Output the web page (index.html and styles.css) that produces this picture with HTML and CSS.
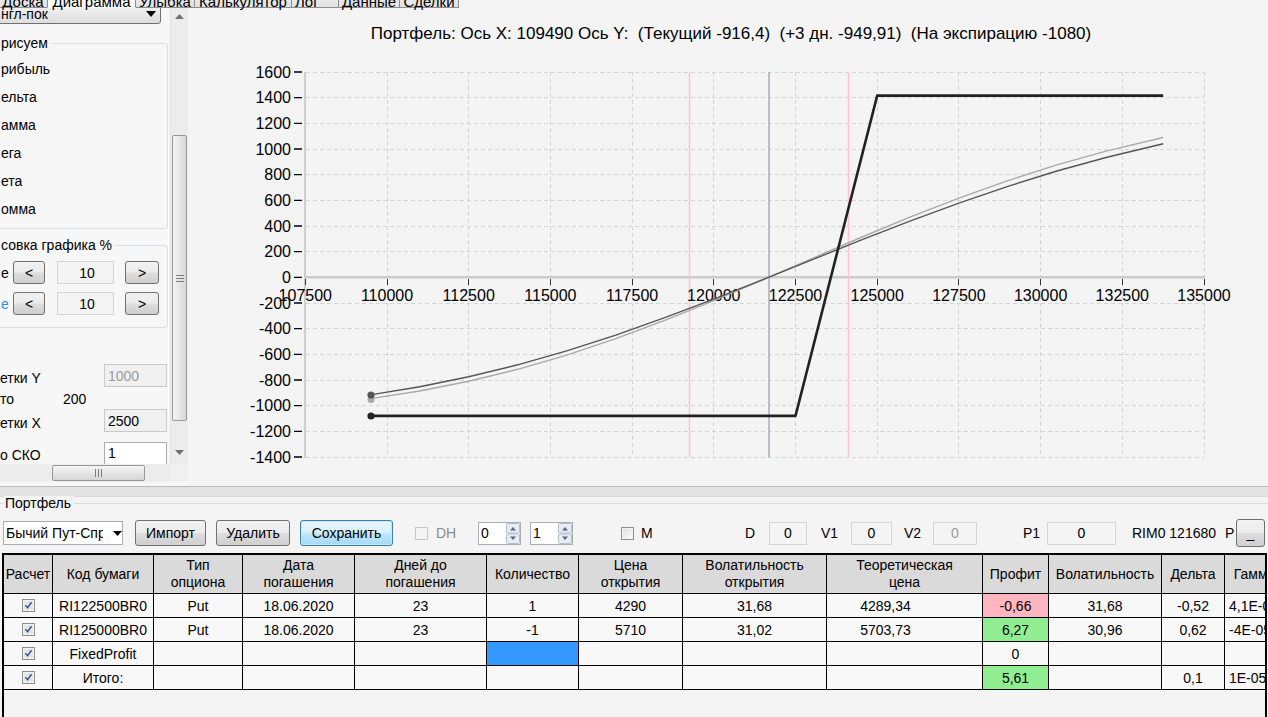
FILE: index.html
```html
<!DOCTYPE html>
<html lang="ru">
<head>
<meta charset="utf-8">
<title>Диаграмма</title>
<link rel="stylesheet" href="styles.css">
</head>
<body>
<div class="app">
  <div class="tabs">
    <div class="tabrow">
      <div class="tab w1">Доска</div>
      <div class="tab sel w2">Диаграмма</div>
      <div class="tab w3">Улыбка</div>
      <div class="tab w4">Калькулятор</div>
      <div class="tab w5">Лог</div>
      <div class="tab w6">Данные</div>
      <div class="tab w7">Сделки</div>
    </div>
  </div>

  <div class="upper">
    <div class="left">
      <div class="lp-main">
        <div class="lp-content">
          <div class="tcombo"><span class="tctext">нгл-пок</span><svg class="tcarr" width="10" height="6" viewBox="0 0 10 6"><path d="M0 0H10L5 6Z" fill="#000"/></svg></div>
          <div class="group g1">
            <div class="legend">рисуем</div>
            <div class="item first">рибыль</div>
            <div class="item">ельта</div>
            <div class="item">амма</div>
            <div class="item">ега</div>
            <div class="item">ета</div>
            <div class="item">омма</div>
          </div>
          <div class="group g2">
            <div class="legend">совка графика %</div>
            <div class="brow r1"><span class="bl">е</span><div class="wbtn sb sb-l">&lt;</div><div class="tb ro tb10">10</div><div class="wbtn sb sb-r">&gt;</div></div>
            <div class="brow r2"><span class="bl blue">е</span><div class="wbtn sb sb-l">&lt;</div><div class="tb ro tb10">10</div><div class="wbtn sb sb-r">&gt;</div></div>
          </div>
          <div class="frow fy"><span class="fl">етки Y</span><div class="tb gray dis fb">1000</div></div>
          <div class="frow fs"><span class="fl2">то</span><span>200</span></div>
          <div class="frow fx"><span class="fl">етки X</span><div class="tb gray fb">2500</div></div>
          <div class="frow fc"><span class="fl">о СКО</span><div class="tb fb">1</div></div>
        </div>
        <div class="vscroll">
          <div class="sarr"><svg width="9" height="5" viewBox="0 0 9 5"><path d="M0 5L4.5 0L9 5Z" fill="#707070"/></svg></div>
          <div class="vsp1"></div>
          <div class="vthumb"><svg width="8" height="7" viewBox="0 0 8 7"><path d="M0 0.5H8M0 3.5H8M0 6.5H8" stroke="#7a7a7a" stroke-width="1"/></svg></div>
          <div class="vsp2"></div>
          <div class="sarr"><svg width="9" height="5" viewBox="0 0 9 5"><path d="M0 0L4.5 5L9 0Z" fill="#707070"/></svg></div>
        </div>
      </div>
      <div class="hs-row">
        <div class="hscroll"><div class="hthumb"><svg width="7" height="8" viewBox="0 0 7 8"><path d="M0.5 0V8M3.5 0V8M6.5 0V8" stroke="#7a7a7a" stroke-width="1"/></svg></div></div>
        <div class="corner"></div>
      </div>
    </div>

    <div class="chart">
      <div class="chart-title">Портфель: Ось X: 109490 Ось Y:  (Текущий -916,4)  (+3 дн. -949,91)  (На экспирацию -1080)</div>
      <svg class="plot" width="1080" height="426" viewBox="188 60 1080 426">
        <path d="M306 72.5H1204M306 97.5H1204M306 123.5H1204M306 149.5H1204M306 174.5H1204M306 200.5H1204M306 226.5H1204M306 251.5H1204M306 303.5H1204M306 328.5H1204M306 354.5H1204M306 380.5H1204M306 405.5H1204M306 431.5H1204M306 457.5H1204" stroke="#d4d4d4" stroke-width="1" stroke-dasharray="4 3" fill="none"/>
        <path d="M387.5 72V457M468.5 72V457M550.5 72V457M632.5 72V457M713.5 72V457M795.5 72V457M877.5 72V457M958.5 72V457M1040.5 72V457M1122.5 72V457M1204.5 72V457" stroke="#d4d4d4" stroke-width="1" stroke-dasharray="4 3" fill="none"/>
        <line x1="305" y1="72" x2="305" y2="458" stroke="#cfcfcf" stroke-width="2"/>
        <line x1="304" y1="277.3" x2="1205" y2="277.3" stroke="#cccccc" stroke-width="2.5"/>
        <path d="M294 72H302M294 97.6H302M294 123.3H302M294 149H302M294 174.6H302M294 200.3H302M294 226H302M294 251.6H302M294 277.3H302M294 303H302M294 328.6H302M294 354.3H302M294 380H302M294 405.6H302M294 431.3H302M294 457H302" stroke="#000" stroke-width="1.3"/>
        <path d="M305.5 279V285M387.5 279V285M468.5 279V285M550.5 279V285M632.5 279V285M713.5 279V285M795.5 279V285M877.5 279V285M958.5 279V285M1040.5 279V285M1122.5 279V285M1204.5 279V285" stroke="#333" stroke-width="1"/>
        <g class="ylab" text-anchor="end">
          <text x="291" y="77.5">1600</text>
          <text x="291" y="103.1">1400</text>
          <text x="291" y="128.8">1200</text>
          <text x="291" y="154.5">1000</text>
          <text x="291" y="180.1">800</text>
          <text x="291" y="205.8">600</text>
          <text x="291" y="231.5">400</text>
          <text x="291" y="257.1">200</text>
          <text x="291" y="282.8">0</text>
          <text x="291" y="308.5">-200</text>
          <text x="291" y="334.1">-400</text>
          <text x="291" y="359.8">-600</text>
          <text x="291" y="385.5">-800</text>
          <text x="291" y="411.1">-1000</text>
          <text x="291" y="436.8">-1200</text>
          <text x="291" y="462.5">-1400</text>
        </g>
        <line x1="689.5" y1="72" x2="689.5" y2="457" stroke="#ffc3cd" stroke-width="1.5"/>
        <line x1="848.5" y1="72" x2="848.5" y2="457" stroke="#ffc3cd" stroke-width="1.5"/>
        <line x1="769" y1="72" x2="769" y2="457" stroke="#a6adba" stroke-width="1.5"/>
        <g class="xlab" text-anchor="middle">
          <text x="305.3" y="300.5">107500</text>
          <text x="387" y="300.5">110000</text>
          <text x="468.7" y="300.5">112500</text>
          <text x="550.4" y="300.5">115000</text>
          <text x="632.1" y="300.5">117500</text>
          <text x="713.8" y="300.5">120000</text>
          <text x="795.5" y="300.5">122500</text>
          <text x="877.2" y="300.5">125000</text>
          <text x="958.9" y="300.5">127500</text>
          <text x="1040.6" y="300.5">130000</text>
          <text x="1122.3" y="300.5">132500</text>
          <text x="1204" y="300.5">135000</text>
        </g>
        <polyline points="370.3,398.6 419.7,391 468.7,381.3 517.7,369.3 566.7,355.1 615.8,338.7 664.8,320.4 713.8,300.6 762.8,279.8 811.8,258.6 860.9,237.5 909.9,217.2 958.9,198.1 1007.9,180.6 1056.9,164.9 1106,151.1 1163.2,137.5" fill="none" stroke="#a9a9a9" stroke-width="1.4"/>
        <polyline points="370.3,394.9 419.7,386.8 468.7,376.8 517.7,364.8 566.7,350.8 615.8,335.1 664.8,317.7 713.8,299.1 762.8,279.6 811.8,259.9 860.9,240.2 909.9,221.2 958.9,203.1 1007.9,186.3 1056.9,171 1106,157.5 1163.2,143.8" fill="none" stroke="#555" stroke-width="1.4"/>
        <polyline points="371,415.9 795.5,415.9 877.2,95.6 1163.2,95.6" fill="none" stroke="#222" stroke-width="2.6" stroke-linejoin="round"/>
        <circle cx="371" cy="399.5" r="3.5" fill="#a9a9a9"/>
        <circle cx="371" cy="395" r="3.6" fill="#555"/>
        <circle cx="371" cy="416" r="3.6" fill="#222"/>
      </svg>
    </div>
  </div>

  <div class="splitter"></div>

  <div class="bottom">
    <div class="pfgroup">
      <div class="pflegend">Портфель</div>
      <div class="controls">
        <div class="combo2"><span class="ctext">Бычий Пут-Спред</span><svg class="carr" width="9" height="5" viewBox="0 0 9 5"><path d="M0 0H9L4.5 5Z" fill="#000"/></svg></div>
        <div class="wbtn cbtn b-imp">Импорт</div>
        <div class="wbtn cbtn b-del">Удалить</div>
        <div class="wbtn cbtn focus b-save">Сохранить</div>
        <div class="wcb dis c-dh"></div>
        <span class="lbl dis l-dh">DH</span>
        <div class="spin s0"><span class="stext">0</span><svg class="sbtns" width="14" height="21" viewBox="0 0 14 21"><rect x="0.5" y="0.5" width="13" height="9.5" rx="1" fill="#e8edf3" stroke="#b4bfcc"/><rect x="0.5" y="11" width="13" height="9.5" rx="1" fill="#e8edf3" stroke="#b4bfcc"/><path d="M4 7.5L7 4L10 7.5Z" fill="#4a6890"/><path d="M4 13.5L7 17L10 13.5Z" fill="#4a6890"/></svg></div>
        <div class="spin s1"><span class="stext">1</span><svg class="sbtns" width="14" height="21" viewBox="0 0 14 21"><rect x="0.5" y="0.5" width="13" height="9.5" rx="1" fill="#e8edf3" stroke="#b4bfcc"/><rect x="0.5" y="11" width="13" height="9.5" rx="1" fill="#e8edf3" stroke="#b4bfcc"/><path d="M4 7.5L7 4L10 7.5Z" fill="#4a6890"/><path d="M4 13.5L7 17L10 13.5Z" fill="#4a6890"/></svg></div>
        <div class="wcb c-m"></div>
        <span class="lbl l-m">M</span>
        <span class="lbl l-d">D</span>
        <div class="tb ro cbox t-d">0</div>
        <span class="lbl l-v1">V1</span>
        <div class="tb ro cbox t-v1">0</div>
        <span class="lbl l-v2">V2</span>
        <div class="tb ro cbox dis t-v2">0</div>
        <span class="lbl l-p1">P1</span>
        <div class="tb ro cbox t-p1">0</div>
        <span class="lbl l-rim">RIM0 121680</span>
        <span class="lbl l-p">P</span>
        <div class="wbtn b-min">_</div>
      </div>
      <div class="grid">
        <div class="gtable">
          <div class="gc gh">Расчет</div>
          <div class="gc gh">Код бумаги</div>
          <div class="gc gh">Тип<br>опциона</div>
          <div class="gc gh">Дата<br>погашения</div>
          <div class="gc gh">Дней до<br>погашения</div>
          <div class="gc gh">Количество</div>
          <div class="gc gh">Цена<br>открытия</div>
          <div class="gc gh">Волатильность<br>открытия</div>
          <div class="gc gh">Теоретическая<br>цена</div>
          <div class="gc gh">Профит</div>
          <div class="gc gh">Волатильность</div>
          <div class="gc gh">Дельта</div>
          <div class="gc gh">Гамма</div>

          <div class="gc"><svg class="chk" width="13" height="13" viewBox="0 0 13 13"><rect x="0.5" y="0.5" width="12" height="12" fill="#f2f2f2" stroke="#8e8f8f"/><rect x="2" y="2" width="9" height="9" fill="#e6e6e6"/><path d="M3.5 6.3L5.6 8.8L9.6 3.3" fill="none" stroke="#3d5a8c" stroke-width="1.6"/></svg></div>
          <div class="gc">RI122500BR0</div>
          <div class="gc">Put</div>
          <div class="gc">18.06.2020</div>
          <div class="gc">23</div>
          <div class="gc">1</div>
          <div class="gc">4290</div>
          <div class="gc">31,68</div>
          <div class="gc theo">4289,34</div>
          <div class="gc neg">-0,66</div>
          <div class="gc">31,68</div>
          <div class="gc">-0,52</div>
          <div class="gc gam">4,1E-05</div>

          <div class="gc"><svg class="chk" width="13" height="13" viewBox="0 0 13 13"><rect x="0.5" y="0.5" width="12" height="12" fill="#f2f2f2" stroke="#8e8f8f"/><rect x="2" y="2" width="9" height="9" fill="#e6e6e6"/><path d="M3.5 6.3L5.6 8.8L9.6 3.3" fill="none" stroke="#3d5a8c" stroke-width="1.6"/></svg></div>
          <div class="gc">RI125000BR0</div>
          <div class="gc">Put</div>
          <div class="gc">18.06.2020</div>
          <div class="gc">23</div>
          <div class="gc">-1</div>
          <div class="gc">5710</div>
          <div class="gc">31,02</div>
          <div class="gc theo">5703,73</div>
          <div class="gc pos">6,27</div>
          <div class="gc">30,96</div>
          <div class="gc">0,62</div>
          <div class="gc gam">-4E-05</div>

          <div class="gc"><svg class="chk" width="13" height="13" viewBox="0 0 13 13"><rect x="0.5" y="0.5" width="12" height="12" fill="#f2f2f2" stroke="#8e8f8f"/><rect x="2" y="2" width="9" height="9" fill="#e6e6e6"/><path d="M3.5 6.3L5.6 8.8L9.6 3.3" fill="none" stroke="#3d5a8c" stroke-width="1.6"/></svg></div>
          <div class="gc">FixedProfit</div>
          <div class="gc"></div>
          <div class="gc"></div>
          <div class="gc"></div>
          <div class="gc selc"></div>
          <div class="gc"></div>
          <div class="gc"></div>
          <div class="gc"></div>
          <div class="gc">0</div>
          <div class="gc"></div>
          <div class="gc"></div>
          <div class="gc"></div>

          <div class="gc"><svg class="chk" width="13" height="13" viewBox="0 0 13 13"><rect x="0.5" y="0.5" width="12" height="12" fill="#f2f2f2" stroke="#8e8f8f"/><rect x="2" y="2" width="9" height="9" fill="#e6e6e6"/><path d="M3.5 6.3L5.6 8.8L9.6 3.3" fill="none" stroke="#3d5a8c" stroke-width="1.6"/></svg></div>
          <div class="gc">Итого:</div>
          <div class="gc"></div>
          <div class="gc"></div>
          <div class="gc"></div>
          <div class="gc"></div>
          <div class="gc"></div>
          <div class="gc"></div>
          <div class="gc"></div>
          <div class="gc pos">5,61</div>
          <div class="gc"></div>
          <div class="gc">0,1</div>
          <div class="gc gam">1E-05</div>
        </div>
      </div>
    </div>
  </div>
</div>
</body>
</html>
```

FILE: styles.css
```css
* { box-sizing: border-box; }
html, body { margin: 0; padding: 0; }
body {
  font-family: "Liberation Sans", Arial, sans-serif;
  font-size: 14px;
  color: #000;
  background: #f4f4f4;
}
.app {
  width: 1268px;
  height: 717px;
  overflow: hidden;
  display: flex;
  flex-direction: column;
  background: #f4f4f4;
}

/* tabs */
.tabs { height: 8px; flex: none; position: relative; z-index: 2; }
.tabrow { display: flex; margin-top: -14px; margin-left: -2px; height: 22px; }
.tab {
  flex: none;
  height: 22px;
  margin-right: -1px;
  padding-top: 7px;
  line-height: 15px;
  font-size: 15px;
  text-align: center;
  white-space: nowrap;
  border: 1px solid #898c95;
  background: linear-gradient(#f3f3f3, #e2e2e2);
}
.tab.sel { background: #fff; border-bottom-color: #fff; position: relative; z-index: 1; }
.w1 { width: 50px; }
.w2 { width: 89px; }
.w3 { width: 60px; }
.w4 { width: 98px; }
.w5 { width: 48px; text-align: left; padding-left: 3px; }
.w6 { width: 62px; }
.w7 { width: 60px; }

/* upper area */
.upper { display: flex; height: 478px; flex: none; }
.left { width: 188px; flex: none; display: flex; flex-direction: column; background: #f7f7f7; }
.lp-main { display: flex; height: 456px; flex: none; }
.lp-content { width: 170px; flex: none; overflow: hidden; display: flex; flex-direction: column; }

.tcombo {
  flex: none;
  margin-top: -4px;
  margin-left: -4px;
  width: 165px;
  height: 20px;
  border: 1px solid #707070;
  border-radius: 3px;
  background: linear-gradient(#f2f2f2, #dedede);
  display: flex;
  align-items: center;
  padding-left: 4px;
}
.tctext { flex: 1; }
.tcarr { margin-right: 4px; }

.group {
  flex: none;
  margin-left: -10px;
  width: 178px;
  border: 1px solid #d5dfe5;
  border-radius: 3px;
  padding-left: 10px;
  display: flex;
  flex-direction: column;
}
.legend {
  align-self: flex-start;
  margin-top: -8px;
  height: 15px;
  line-height: 15px;
  padding-right: 3px;
  background: #f7f7f7;
}
.g1 { margin-top: 19px; height: 186px; }
.item { height: 28px; line-height: 28px; flex: none; }
.item.first { margin-top: 4px; }
.g2 { margin-top: 16px; height: 83px; }
.brow { display: flex; align-items: center; height: 25px; flex: none; }
.r1 { margin-top: 7px; }
.r2 { margin-top: 6px; }
.bl { width: 12px; flex: none; }
.bl.blue { color: #2f8be6; }
.sb { height: 23px; }
.sb-l { width: 32px; }
.sb-r { width: 34px; margin-left: 11px; }
.tb10 { width: 57px; margin-left: 12px; justify-content: center; }

.frow { display: flex; align-items: center; flex: none; }
.fl { width: 104px; flex: none; padding-top: 4px; }
.fl2 { width: 63px; flex: none; }
.fb { width: 63px; height: 100%; }
.fy { margin-top: 37px; height: 21px; }
.fs { margin-top: 3px; height: 20px; }
.fx { margin-top: 1px; height: 21px; }
.fc { margin-top: 11px; height: 22px; }

.vscroll {
  width: 18px;
  flex: none;
  display: flex;
  flex-direction: column;
  background: #ececec;
  border-left: 1px solid #e2e2e2;
}
.sarr { height: 17px; flex: none; display: flex; align-items: center; justify-content: center; }
.vsp1 { height: 110px; flex: none; }
.vthumb {
  height: 286px;
  flex: none;
  margin: 0 1px;
  border: 1px solid #979797;
  border-radius: 2px;
  background: linear-gradient(to right, #f4f4f4, #e6e6e6 50%, #d6d6d6);
  display: flex;
  align-items: center;
  justify-content: center;
}
.vsp2 { height: 23px; flex: none; }

.hs-row { display: flex; height: 18px; flex: none; }
.hscroll { width: 170px; flex: none; background: #ececec; display: flex; align-items: center; }
.hthumb {
  margin-left: 52px;
  width: 93px;
  height: 16px;
  border: 1px solid #979797;
  border-radius: 2px;
  background: linear-gradient(#f4f4f4, #e6e6e6 50%, #d6d6d6);
  display: flex;
  align-items: center;
  justify-content: center;
}
.corner { width: 18px; flex: none; background: #f0f0f0; }

/* chart */
.chart { flex: 1; display: flex; flex-direction: column; background: #f4f4f4; }
.chart-title {
  height: 52px;
  flex: none;
  padding-top: 16px;
  padding-left: 6px;
  line-height: 20px;
  font-size: 17px;
  text-align: center;
  white-space: pre;
}
.plot { display: block; flex: none; }
.ylab text, .xlab text { font-family: "Liberation Sans", Arial, sans-serif; font-size: 16px; fill: #000; }

/* splitter */
.splitter {
  height: 11px;
  flex: none;
  background: #e4e4e4;
  border-top: 1px solid #b9b9b9;
  border-bottom: 1px solid #d9d9d9;
}

/* bottom */
.bottom { flex: 1; display: flex; flex-direction: column; background: #f4f4f4; }
.pfgroup {
  flex: 1;
  margin-top: 6px;
  border-top: 1px solid #d5dfe5;
  display: flex;
  flex-direction: column;
}
.pflegend {
  align-self: flex-start;
  margin-top: -8px;
  margin-left: 4px;
  height: 15px;
  line-height: 15px;
  padding: 0 3px 0 1px;
  background: #f4f4f4;
}
.controls { display: flex; align-items: center; height: 26px; margin-top: 9px; flex: none; }

.wbtn {
  flex: none;
  display: flex;
  align-items: center;
  justify-content: center;
  border: 1px solid #707070;
  border-radius: 3px;
  background: linear-gradient(#f2f2f2 0%, #ebebeb 48%, #dddddd 52%, #cfcfcf 100%);
  color: #000;
  white-space: nowrap;
}
.wbtn.focus {
  border-color: #3c7fb1;
  background: linear-gradient(#eaf6fd 0%, #d9f0fc 48%, #bee6fd 52%, #a7d9f5 100%);
  box-shadow: inset 0 0 0 1px #c8e6f8;
}
.cbtn { height: 26px; }
.b-imp { width: 71px; margin-left: 12px; }
.b-del { width: 74px; margin-left: 10px; }
.b-save { width: 93px; margin-left: 10px; }
.b-min { width: 29px; height: 28px; margin-left: 1px; align-items: flex-end; padding-bottom: 5px; }

.combo2 {
  flex: none;
  margin-left: 3px;
  width: 120px;
  height: 24px;
  border: 1px solid #abadb3;
  background: #fff;
  display: flex;
  align-items: center;
  padding-left: 2px;
}
.ctext { width: 97px; overflow: hidden; white-space: nowrap; flex: none; }
.carr { margin-left: 10px; }

.tb {
  flex: none;
  display: flex;
  align-items: center;
  padding-left: 3px;
  height: 23px;
  border: 1px solid #abadb3;
  background: #fff;
  white-space: nowrap;
}
.tb.ro { background: #f4f4f4; border-color: #d4d4d4; }
.tb.gray { background: #f0f0f0; border-color: #c9c9c9; }
.tb.dis { color: #9a9a9a; }
.cbox { justify-content: center; padding-left: 0; }

.wcb {
  flex: none;
  width: 13px;
  height: 13px;
  border: 1px solid #8e8f8f;
  background: linear-gradient(135deg, #dcdcdc, #fdfdfd);
  box-shadow: inset 0 0 0 1px #f4f4f4;
}
.wcb.dis { border-color: #c7c7c7; background: #f4f4f4; box-shadow: none; }
.c-dh { margin-left: 22px; }
.c-m { margin-left: 48px; }

.lbl { flex: none; white-space: nowrap; }
.lbl.dis { color: #8d8d8d; }
.l-dh { margin-left: 8px; width: 20px; }
.l-m { margin-left: 7px; width: 12px; }
.l-d { margin-left: 92px; width: 12px; }
.t-d { margin-left: 12px; width: 38px; }
.l-v1 { margin-left: 14px; width: 18px; }
.t-v1 { margin-left: 12px; width: 41px; }
.l-v2 { margin-left: 12px; width: 20px; }
.t-v2 { margin-left: 9px; width: 44px; }
.l-p1 { margin-left: 46px; width: 18px; }
.t-p1 { margin-left: 6px; width: 69px; }
.l-rim { margin-left: 16px; width: 86px; }
.l-p { margin-left: 7px; width: 10px; }

.spin {
  flex: none;
  display: flex;
  align-items: center;
  width: 43px;
  height: 23px;
  border: 1px solid #abadb3;
  background: #fff;
}
.s0 { margin-left: 22px; }
.s1 { margin-left: 9px; }
.stext { flex: 1; padding-left: 2px; }
.sbtns { display: block; margin-right: 0; }

/* grid */
.grid {
  flex: 1;
  margin-top: 7px;
  margin-left: 2px;
  width: 1265px;
  border: 2px solid #000;
  border-bottom: none;
  overflow: hidden;
  background: #f4f4f4;
}
.gtable {
  display: grid;
  grid-template-columns: 49px 101px 89px 112px 132px 92px 104px 144px 156px 66px 113px 63px 60px;
  grid-template-rows: 39px 24px 24px 24px 24px;
  width: max-content;
}
.gc {
  border-right: 1px solid #000;
  border-bottom: 1px solid #000;
  display: flex;
  align-items: center;
  justify-content: center;
  text-align: center;
  white-space: nowrap;
  overflow: hidden;
  background: #f8f8f8;
}
.gh { background: #dadada; line-height: 17px; }
.theo { padding-right: 38px; }
.gam { justify-content: flex-start; padding-left: 4px; }
.neg { background: #ffb6c1; }
.pos { background: #90ee90; }
.selc { background: #3399ff; }
.chk { display: block; }
```
